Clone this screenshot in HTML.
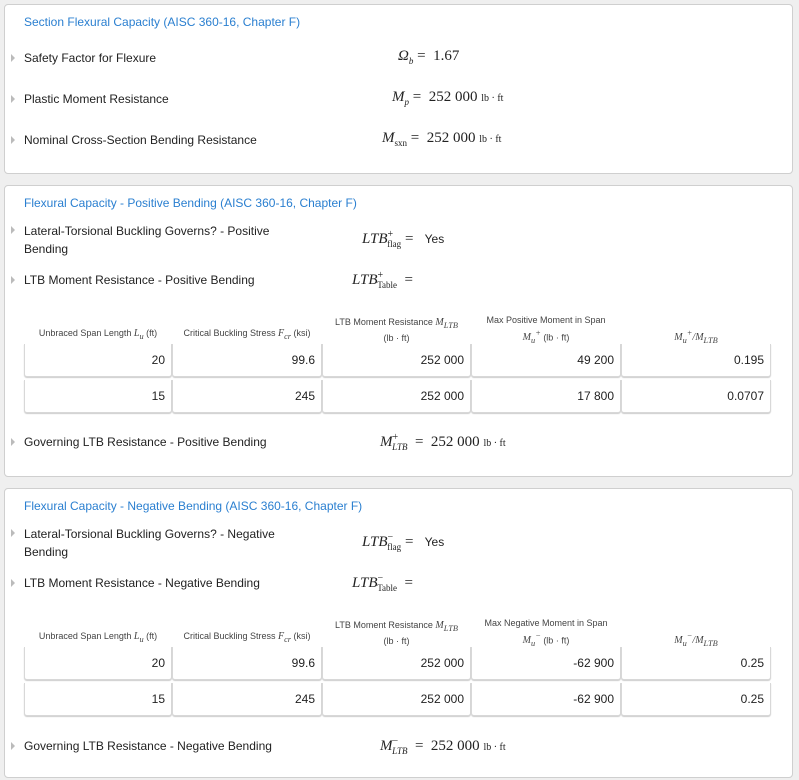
<!DOCTYPE html>
<html><head><meta charset="utf-8"><style>
body{margin:0;width:799px;height:780px;background:#efefef;position:relative;font-family:"Liberation Sans",sans-serif;font-size:12px;color:#222;overflow:hidden}
.p{position:absolute;left:4px;width:787px;background:#fff;border:1px solid #cfcfcf;border-radius:4px}
.a{position:absolute;white-space:nowrap}
.t{color:#2a7fd0;font-size:12px}
.tri{position:absolute;width:0;height:0;border-left:4px solid #bbb;border-top:4px solid transparent;border-bottom:4px solid transparent}
.m{font-family:"Liberation Serif",serif;font-size:15px}
.mi{font-style:italic}
.u{font-size:10px}
.c{position:absolute;height:33px;background:#fff;border:1px solid #d8d8d8;border-top:none;border-radius:0 0 3px 3px;box-shadow:0 1px 1px #ccc;text-align:right;line-height:33px;font-size:12px;box-sizing:border-box;padding-right:6px}
.h{position:absolute;font-size:9px;color:#444;text-align:center;line-height:13px}
.hm{font-family:"Liberation Serif",serif;font-style:italic;font-size:10px}
</style></head><body>
<div class="p" style="top:4px;height:168px"></div>
<div class="p" style="top:185px;height:290px"></div>
<div class="p" style="top:488px;height:288px"></div>

<div class="a t" style="left:24px;top:15px">Section Flexural Capacity (AISC 360-16, Chapter F)</div>
<div class="tri" style="left:11px;top:54px"></div><div class="a" style="left:24px;top:51px">Safety Factor for Flexure</div>
<div class="a m" style="left:398px;top:48px"><span class="mi">Ω<sub style="font-size:9px">b</sub></span> = &nbsp;1.67</div>
<div class="tri" style="left:11px;top:95px"></div><div class="a" style="left:24px;top:92px">Plastic Moment Resistance</div>
<div class="a m" style="left:392px;top:89px"><span class="mi">M<sub style="font-size:9px">p</sub></span> = &nbsp;252 000 <span class="u">lb · ft</span></div>
<div class="tri" style="left:11px;top:136px"></div><div class="a" style="left:24px;top:133px">Nominal Cross-Section Bending Resistance</div>
<div class="a m" style="left:382px;top:130px"><span class="mi">M</span><sub style="font-size:9px">sxn</sub> = &nbsp;252 000 <span class="u">lb · ft</span></div>

<div class="a t" style="left:24px;top:196px">Flexural Capacity - Positive Bending (AISC 360-16, Chapter F)</div>
<div class="tri" style="left:11px;top:226px"></div><div class="a" style="left:24px;top:222px;line-height:18px">Lateral-Torsional Buckling Governs? - Positive<br>Bending</div>
<div class="a m" style="left:362px;top:229px"><span class="mi">LTB</span><sup style="font-size:10px">+</sup><sub style="font-size:9px;margin-left:-6px">flag</sub> = &nbsp;&nbsp;<span style="font-family:'Liberation Sans';font-size:12px">Yes</span></div>
<div class="tri" style="left:11px;top:276px"></div><div class="a" style="left:24px;top:273px">LTB Moment Resistance - Positive Bending</div>
<div class="a m" style="left:352px;top:270px"><span class="mi">LTB</span><sup style="font-size:10px">+</sup><sub style="font-size:9px;margin-left:-6px">Table</sub> &nbsp;=</div>

<div class="h" style="left:24px;top:327px;width:148px">Unbraced Span Length <span class="hm">L<sub>u</sub></span> (ft)</div>
<div class="h" style="left:172px;top:327px;width:150px">Critical Buckling Stress <span class="hm">F<sub>cr</sub></span> (ksi)</div>
<div class="h" style="left:322px;top:316px;width:149px">LTB Moment Resistance <span class="hm">M<sub>LTB</sub></span><br>(lb · ft)</div>
<div class="h" style="left:471px;top:314px;width:150px">Max Positive Moment in Span<br><span class="hm">M<sub>u</sub><sup>+</sup></span> (lb · ft)</div>
<div class="h" style="left:621px;top:327px;width:150px"><span class="hm">M<sub>u</sub><sup>+</sup>/M<sub>LTB</sub></span></div>
<div class="c" style="left:24px;top:344px;width:148px">20</div><div class="c" style="left:172px;top:344px;width:150px">99.6</div><div class="c" style="left:322px;top:344px;width:149px">252 000</div><div class="c" style="left:471px;top:344px;width:150px">49 200</div><div class="c" style="left:621px;top:344px;width:150px">0.195</div>
<div class="c" style="left:24px;top:380px;width:148px">15</div><div class="c" style="left:172px;top:380px;width:150px">245</div><div class="c" style="left:322px;top:380px;width:149px">252 000</div><div class="c" style="left:471px;top:380px;width:150px">17 800</div><div class="c" style="left:621px;top:380px;width:150px">0.0707</div>
<div class="tri" style="left:11px;top:438px"></div><div class="a" style="left:24px;top:435px">Governing LTB Resistance - Positive Bending</div>
<div class="a m" style="left:380px;top:432px"><span class="mi">M</span><sup style="font-size:10px">+</sup><sub class="mi" style="font-size:9px;margin-left:-6px">LTB</sub> &nbsp;= &nbsp;252 000 <span class="u">lb · ft</span></div>

<div class="a t" style="left:24px;top:499px">Flexural Capacity - Negative Bending (AISC 360-16, Chapter F)</div>
<div class="tri" style="left:11px;top:529px"></div><div class="a" style="left:24px;top:525px;line-height:18px">Lateral-Torsional Buckling Governs? - Negative<br>Bending</div>
<div class="a m" style="left:362px;top:532px"><span class="mi">LTB</span><sup style="font-size:10px">−</sup><sub style="font-size:9px;margin-left:-6px">flag</sub> = &nbsp;&nbsp;<span style="font-family:'Liberation Sans';font-size:12px">Yes</span></div>
<div class="tri" style="left:11px;top:579px"></div><div class="a" style="left:24px;top:576px">LTB Moment Resistance - Negative Bending</div>
<div class="a m" style="left:352px;top:573px"><span class="mi">LTB</span><sup style="font-size:10px">−</sup><sub style="font-size:9px;margin-left:-6px">Table</sub> &nbsp;=</div>

<div class="h" style="left:24px;top:630px;width:148px">Unbraced Span Length <span class="hm">L<sub>u</sub></span> (ft)</div>
<div class="h" style="left:172px;top:630px;width:150px">Critical Buckling Stress <span class="hm">F<sub>cr</sub></span> (ksi)</div>
<div class="h" style="left:322px;top:619px;width:149px">LTB Moment Resistance <span class="hm">M<sub>LTB</sub></span><br>(lb · ft)</div>
<div class="h" style="left:471px;top:617px;width:150px">Max Negative Moment in Span<br><span class="hm">M<sub>u</sub><sup>−</sup></span> (lb · ft)</div>
<div class="h" style="left:621px;top:630px;width:150px"><span class="hm">M<sub>u</sub><sup>−</sup>/M<sub>LTB</sub></span></div>
<div class="c" style="left:24px;top:647px;width:148px">20</div><div class="c" style="left:172px;top:647px;width:150px">99.6</div><div class="c" style="left:322px;top:647px;width:149px">252 000</div><div class="c" style="left:471px;top:647px;width:150px">-62 900</div><div class="c" style="left:621px;top:647px;width:150px">0.25</div>
<div class="c" style="left:24px;top:683px;width:148px">15</div><div class="c" style="left:172px;top:683px;width:150px">245</div><div class="c" style="left:322px;top:683px;width:149px">252 000</div><div class="c" style="left:471px;top:683px;width:150px">-62 900</div><div class="c" style="left:621px;top:683px;width:150px">0.25</div>
<div class="tri" style="left:11px;top:742px"></div><div class="a" style="left:24px;top:739px">Governing LTB Resistance - Negative Bending</div>
<div class="a m" style="left:380px;top:736px"><span class="mi">M</span><sup style="font-size:10px">−</sup><sub class="mi" style="font-size:9px;margin-left:-6px">LTB</sub> &nbsp;= &nbsp;252 000 <span class="u">lb · ft</span></div>
</body></html>
